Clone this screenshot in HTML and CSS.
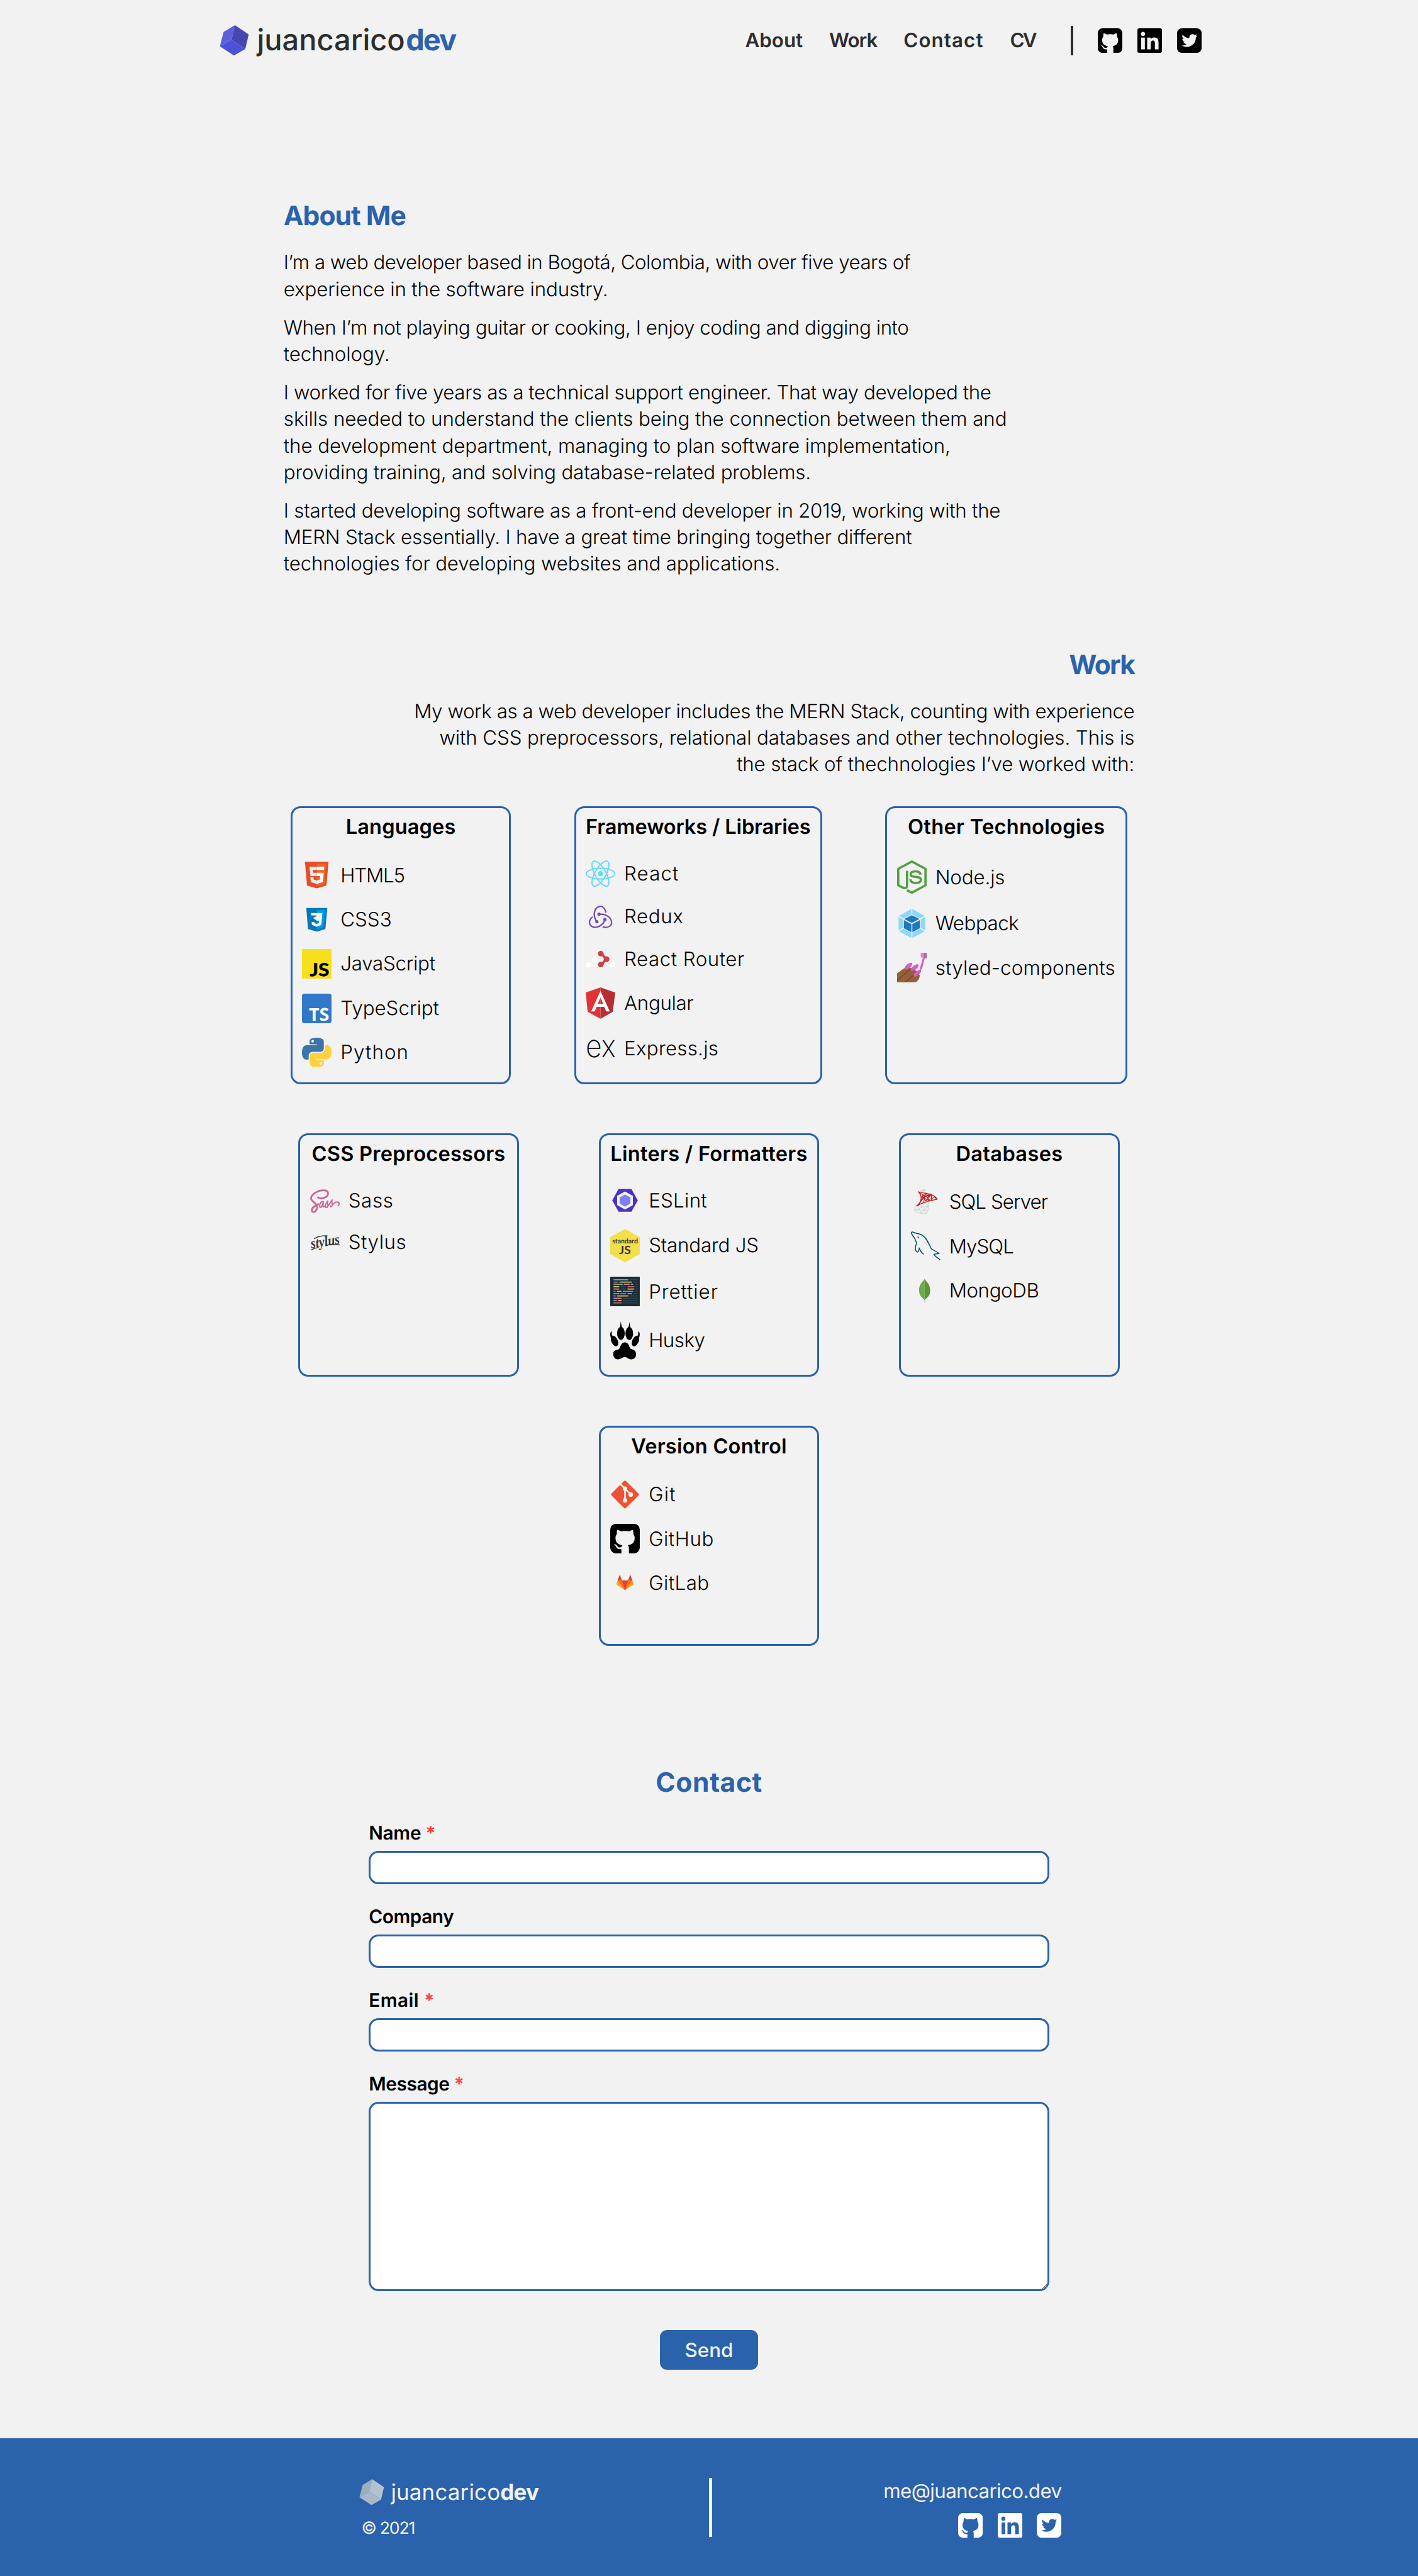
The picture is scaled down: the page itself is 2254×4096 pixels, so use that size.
FILE: index.html
```html
<!DOCTYPE html>
<html lang="en">
<head>
<meta charset="utf-8">
<title>juancaricodev</title>
<link rel="stylesheet" href="styles.css">
</head>
<body>
<svg class="sprite" aria-hidden="true">
  <symbol id="github" viewBox="0 0 180 180"><path d="M34 0H146A34 34 0 0 1 180 34V146A34 34 0 0 1 146 180H114V150C114 140 112 134 107 130C134 127 149 112 149 86C149 76 146 68 140 61C142 54 141 45 138 37C131 37 123 41 115 46C99 42 82 42 66 46C58 41 50 37 43 37C40 45 39 54 41 61C35 68 32 76 32 86C32 112 47 127 74 130C71 133 69 137 68 142C56 146 48 143 42 134C38 127 32 124 25 124C23 126 26 128 29 130C34 134 36 140 39 145C45 154 56 155 68 154V180H34A34 34 0 0 1 0 146V34A34 34 0 0 1 34 0Z"/></symbol>
  <symbol id="linkedin" viewBox="0 32 448 448"><path d="M416 32H31.9C14.3 32 0 46.5 0 64.3v383.4C0 465.5 14.3 480 31.9 480H416c17.6 0 32-14.500 32-32.300V64.300c0-17.800-14.400-32.300-32-32.300zM135.400 416H69V202.200h66.500V416zm-33.200-243c-21.300 0-38.500-17.300-38.500-38.500S80.900 96 102.200 96c21.200 0 38.500 17.300 38.500 38.500 0 21.300-17.200 38.500-38.500 38.500zm282.100 243h-66.400V312c0-24.800-.5-56.700-34.500-56.700-34.600 0-39.900 27-39.900 54.900V416h-66.400V202.200h63.700v29.200h.9c8.900-16.800 30.600-34.500 62.900-34.500 67.200 0 79.700 44.300 79.700 101.900V416z"/></symbol>
  <symbol id="twitter" viewBox="0 32 448 448"><rect y="32" width="448" height="448" rx="88"/><path class="cut" transform="translate(26 24) scale(.9)" d="M351.100 190.800c.2 2.800.2 5.700.2 8.500 0 86.700-66 186.600-186.600 186.600-37.200 0-71.700-10.800-100.700-29.400 5.300.6 10.400.8 15.800.8 30.700 0 58.900-10.400 81.400-28-28.800-.6-53-19.500-61.300-45.500 10.100 1.500 19.200 1.500 29.600-1.200-30-6.100-52.500-32.500-52.500-64.400v-.8c8.700 4.900 18.900 7.900 29.600 8.300a65.447 65.447 0 0 1-29.200-54.600c0-12.200 3.200-23.400 8.900-33.100 32.300 39.800 80.800 65.800 135.200 68.600-9.300-44.500 24-80.600 64-80.600 18.900 0 35.900 7.900 47.900 20.700 14.800-2.800 29-8.300 41.600-15.800-4.900 15.200-15.200 28-28.800 36.100 13.200-1.400 26-5.100 37.800-10.200-8.900 13.100-20.100 24.700-32.900 34z"/></symbol>
</svg>

<header class="header">
  <a class="brand">
    <svg class="gem" viewBox="446 51 60 62">
      <path fill="#5c60da" d="M477.200 51L470.200 80.700 446.600 94 454.200 64.700Z"/>
      <path fill="#4648b0" d="M477.200 51L505.200 70 498.200 99.700 470.200 80.700Z"/>
      <path fill="#4b52d8" d="M470.200 80.700L498.200 99.700 475.300 112.700 446.600 94Z"/>
    </svg>
    <span class="brand-name">juancarico<b>dev</b></span>
  </a>
  <nav class="nav">
    <a>About</a><a class="m29">Work</a><a class="p34">Contact</a><a class="m84">CV</a>
  </nav>
  <span class="divider"></span>
  <div class="social">
    <svg><use href="#github"/></svg><svg><use href="#linkedin"/></svg><svg><use href="#twitter"/></svg>
  </div>
</header>

<main class="main">
  <section class="about">
    <h2 class="m23">About Me</h2>
    <p><span class="m17">I’m a web developer based in Bogotá, Colombia, with over five years of</span>
      <span class="m04">experience in the software industry.</span></p>
    <p><span class="m14">When I’m not playing guitar or cooking, I enjoy coding and digging into</span>
      <span class="m03">technology.</span></p>
    <p><span class="m12">I worked for five years as a technical support engineer. That way developed the</span>
      <span class="m02">skills needed to understand the clients being the connection between them and</span>
      <span class="m02">the development department, managing to plan software implementation,</span>
      <span class="m05">providing training, and solving database-related problems.</span></p>
    <p><span class="m08">I started developing software as a front-end developer in 2019, working with the</span>
      <span class="m07">MERN Stack essentially. I have a great time bringing together different</span>
      <span class="m05">technologies for developing websites and applications.</span></p>
  </section>

  <section class="work">
    <h2 class="m41">Work</h2>
    <p><span class="m14">My work as a web developer includes the MERN Stack, counting with experience</span>
      <span class="m03">with CSS preprocessors, relational databases and other technologies. This is</span>
      <span class="m05">the stack of thechnologies I’ve worked with:</span></p>
  </section>

  <div class="cards">
    <div class="row row-first">
      <article class="card">
        <h3 class="p04">Languages</h3>
        <ul>
          <li><svg class="i60" viewBox="0 0 60 60"><g transform="translate(6 3)"><path fill="#e44d26" d="M0 0H48L43.700 48.200 24 54 4.300 48.200Z"/><path fill="#f16529" d="M24 3.800H43L39.700 44.400 24 49Z"/><path fill="#ebebeb" d="M9 10H24V16.400H16L16.600 22.300H24V29H11.400ZM10.900 31H17.400L17.800 36 24 37.800V44.800L12 41Z"/><path fill="#fff" d="M24 10H39.300L38.700 16.400H24ZM24 22.300H38L36.300 41.200 24 44.800V37.800L30.500 36 31.100 29H24Z"/></g></svg><span class="m38">HTML5</span></li>
          <li><svg class="i60" viewBox="0 0 60 60"><g transform="translate(8.700 6)"><path fill="#0277bd" d="M0 0H42.700L38.800 43 21.300 48 3.500 43Z"/><path fill="#039be5" d="M21.300 4H38.300L35 40 21.300 43.600Z"/><path fill="#fff" d="M9.700 10.300H32.700L30.500 34.500 21.300 38 11.500 34.700 11 28.500H16.500L16.800 31 21.300 32.300 25.800 31 26.300 25.600H21.300L10.200 20.800 21.300 15.400H10.200Z M21.300 15.400V20.500H26.600L27 15.400Z" fill-rule="evenodd"/><path fill="#fff" d="M10.200 20.500L21.300 15.400H27L26.600 20.500 21.300 25.600Z"/><path fill="#0277bd" d="M9.700 15.400H21.300V16.400L14 20.500H9.700ZM9.700 20.500H14L21.300 25.600H9.700Z"/></g></svg><span>CSS3</span></li>
          <li><svg class="i60" viewBox="0 0 60 60"><path fill="#f7df1e" d="M0 0H60V60H0Z"/><text class="mark" x="16" y="54.700" font-size="36" textLength="39.500" lengthAdjust="spacingAndGlyphs">JS</text></svg><span class="m08">JavaScript</span></li>
          <li><svg class="i60" viewBox="0 0 60 60"><rect width="60" height="60" rx="5" fill="#3178c6"/><text class="mark mark-ts" x="14" y="54.700" font-size="36.500" textLength="41.500" lengthAdjust="spacingAndGlyphs">TS</text></svg><span>TypeScript</span></li>
          <li><svg class="i60" viewBox="0 0 256 256"><path fill="#3a75a8" d="M126.916.072c-64.832 0-60.784 28.115-60.784 28.115l.072 29.128h61.868v8.745H41.631S.145 61.355.145 126.770c0 65.417 36.210 63.097 36.210 63.097h21.610v-30.356s-1.165-36.210 35.632-36.210h61.362s34.475.557 34.475-33.319V33.970S194.670.072 126.916.072zM92.802 19.660a11.120 11.120 0 0 1 11.130 11.130 11.120 11.120 0 0 1-11.130 11.130 11.120 11.120 0 0 1-11.130-11.130 11.120 11.120 0 0 1 11.130-11.130z"/><path fill="#ffd140" d="M128.757 254.126c64.832 0 60.784-28.115 60.784-28.115l-.072-29.127H127.600v-8.745h86.441s41.486 4.705 41.486-60.712c0-65.416-36.210-63.096-36.210-63.096h-21.610v30.355s1.165 36.210-35.632 36.210h-61.362s-34.475-.557-34.475 33.320v56.013s-5.235 33.897 62.518 33.897zm34.114-19.586a11.120 11.120 0 0 1-11.130-11.130 11.120 11.120 0 0 1 11.130-11.131 11.120 11.120 0 0 1 11.130 11.130 11.120 11.120 0 0 1-11.130 11.130z"/></svg><span class="p35">Python</span></li>
        </ul>
      </article>

      <article class="card">
        <h3 class="m04">Frameworks / Libraries</h3>
        <ul>
          <li><svg class="i54" viewBox="0 0 60 54"><g fill="none" stroke="#61dafb" stroke-width="2.400"><ellipse cx="30" cy="27" rx="28.800" ry="11"/><ellipse cx="30" cy="27" rx="28.800" ry="11" transform="rotate(60 30 27)"/><ellipse cx="30" cy="27" rx="28.800" ry="11" transform="rotate(120 30 27)"/></g><circle cx="30" cy="27" r="5.200" fill="#61dafb"/></svg><span class="p35">React</span></li>
          <li><svg class="i60" viewBox="0 0 60 60"><path fill="#764abc" transform="translate(6.500 6.500) scale(1.980 2)" d="M16.634 16.504c.87-.075 1.543-.84 1.500-1.754-.047-.914-.796-1.648-1.709-1.648h-.061a1.710 1.710 0 00-1.648 1.769c.03.479.226.869.494 1.153-1.048 2.038-2.621 3.535-5.005 4.795-1.603.838-3.296 1.154-4.944.93-1.378-.195-2.456-.81-3.116-1.799-.988-1.499-1.078-3.116-.255-4.734.601-1.170 1.499-2.023 2.099-2.443-.15-.389-.33-1.048-.42-1.542-4.436 3.177-3.985 7.521-2.637 9.574 1.004 1.498 3.057 2.456 5.304 2.456.599 0 1.229-.044 1.843-.194 3.896-.749 6.848-3.086 8.541-6.532zm5.348-3.746c-2.320-2.728-5.738-4.226-9.634-4.226h-.51c-.253-.554-.837-.899-1.498-.899h-.045c-.943 0-1.678.81-1.647 1.753.03.898.794 1.648 1.708 1.648h.074c.675-.03 1.259-.45 1.498-1.049h.555c2.309 0 4.495.674 6.488 1.992 1.527 1.005 2.622 2.323 3.237 3.896.538 1.288.509 2.547-.045 3.597-.855 1.647-2.294 2.517-4.196 2.517-1.199 0-2.367-.375-2.967-.644-.359.298-.959.793-1.394 1.093 1.318.598 2.652.943 3.940.943 2.922 0 5.093-1.647 5.918-3.236.898-1.798.824-4.824-1.470-7.416zM6.490 17.042c.03.899.793 1.648 1.708 1.648h.06a1.688 1.688 0 001.648-1.768c0-.9-.779-1.647-1.693-1.647h-.06c-.06 0-.149 0-.226.029-1.243-2.098-1.768-4.347-1.572-6.772.12-1.828.72-3.417 1.797-4.735.899-1.124 2.592-1.679 3.746-1.708 3.236-.061 4.585 3.971 4.689 5.574l1.498.45c-.345-4.914-3.400-7.492-6.322-7.492-2.742 0-5.273 1.993-6.293 4.915-1.393 3.896-.479 7.641 1.229 10.638-.149.195-.239.554-.209.868z"/></svg><span class="p19">Redux</span></li>
          <li><svg class="i54" viewBox="0 0 60 54"><g fill="#fff"><circle cx="5.500" cy="38.200" r="5.600"/><circle cx="18.300" cy="26.700" r="5.600"/><circle cx="54.400" cy="38.200" r="5.600"/></g><g fill="#ca4245"><circle cx="30.500" cy="15.800" r="5.600"/><circle cx="30.500" cy="38" r="5.600"/><circle cx="42.700" cy="27" r="5.500"/><path d="M30 10.300C38 10.500 35 20 41 21.500H43V32.500H41C35 34 38 43.500 30 43.500L33 33C38 31 38 23 33 21Z"/></g></svg><span class="p16">React Router</span></li>
          <li><svg class="i64" viewBox="0 0 60 64"><path fill="#e23237" d="M30 0V64L4 49.500 0 10.500Z"/><path fill="#b52e31" d="M30 0L60 10.500 55 49.500 30 64Z"/><path fill="#fff" fill-rule="evenodd" d="M30 7L11 49H18.300L22.200 39.500H37.700L41.600 49H48.900ZM30 20L35.600 33.500H24.500Z"/></svg><span class="m11">Angular</span></li>
          <li><svg class="i60" viewBox="0 0 60 60"><text class="mark-ex" x="0" y="47" font-size="64" textLength="61" lengthAdjust="spacingAndGlyphs">ex</text></svg><span class="p08">Express.js</span></li>
        </ul>
      </article>

      <article class="card">
        <h3 class="p09">Other Technologies</h3>
        <ul>
          <li><svg class="i68" viewBox="0 0 60 68"><g fill="none" stroke="#539e43" stroke-width="4.600" stroke-linejoin="round"><path d="M20 60.500L30 65.700 57.700 50.800V17.200L30 2.300 2.300 17.200V50.800L11.500 55.300Q20.200 59 20.200 50V21.500"/><path d="M47.500 29C47 24.500 43 22.300 38 22.300 31 22.300 27.500 24.500 27.500 28 27.500 32 31 33 38 33.700 45 34.400 48.300 35.500 48.300 39.700 48.300 44 44.500 46 38.500 46 31 46 27.300 43.500 26.700 38.500"/></g></svg><span class="m04">Node.js</span></li>
          <li><svg class="i60" viewBox="0 0 60 60"><path fill="#8ed6fb" fill-rule="evenodd" d="M30 0L57 15V45L30 60 3 45V15ZM30 11.500L12 20.500V40L30 49.500 48 40V20.500Z"/><path class="gap" stroke-width="2" d="M30 0V12M30 48V60M57 15L47 21M13 21L3 15M3 45L13 39M47 39L57 45"/><path fill="#1c78c0" d="M30 13L45.500 20.800 30 28.800 14.500 20.800ZM13.800 23L29 31V47.500L13.800 39.500ZM46.200 23L31 31V47.500L46.200 39.500Z"/></svg><span class="m15">Webpack</span></li>
          <li><svg class="i60" viewBox="0 0 60 60"><path fill="#955f38" d="M0 42C8 36 14 31 21 28L33 33 41 38 46 46C46 52 43 57 37 60H0Z"/><path fill="none" stroke="#6d3f22" stroke-width="1.600" d="M0 56C10 48 18 41 26 34M16 60C24 54 30 48 36 43"/><g fill="#d35fc0"><ellipse cx="23" cy="27" rx="9.500" ry="4.200" transform="rotate(-38 23 27)"/><ellipse cx="36" cy="30" rx="9.500" ry="4.200" transform="rotate(-38 36 30)"/><ellipse cx="41" cy="41.500" rx="9.500" ry="4" transform="rotate(-38 41 41.500)"/><path d="M52.500 10H56.500L51 31 45 39 47 29Z"/></g><path fill="#f07ccb" d="M48 0H60V11H55L48 9Z"/><path fill="#b0629b" d="M55 0H60V11H55Z"/></svg><span class="p06">styled-components</span></li>
        </ul>
      </article>
    </div>

    <div class="row row-second">
      <article class="card">
        <h3 class="p07">CSS Preprocessors</h3>
        <ul>
          <li><svg class="i54" viewBox="0 0 60 54"><g fill="none" stroke="#cf649a" stroke-linecap="round" stroke-linejoin="round"><path stroke-width="3.600" d="M16 20.500C22 24 36 22 36.300 12.500 36.500 3 20 5 10 11 2 16.500 -1 23 5 28 10 32 16 37 13.500 44 10.500 51.500 3 52 3.500 46 4 40 10 37 17 34"/><path stroke-width="2.600" d="M26.500 29C21 28 18 37 20 40.500 22 43 25 36 27 30.500 25.500 38 26 41 29 39L36 27.500C32 31 39 35 35 40 33.500 42 31 41 31.500 39M36 38L45 25.500C41 30 48 34 44 38.500 42.500 40 40.500 39 41 37.500M45.500 36C51 27 60 29 58.800 34 58.500 35.500 58 36 57.300 36.500"/></g></svg><span class="p19">Sass</span></li>
          <li><svg class="i54" viewBox="0 0 60 54"><g transform="rotate(-9 30 27)"><text class="mark-stylus" x="1" y="35" font-size="29" textLength="59" lengthAdjust="spacingAndGlyphs">stylus</text></g><path fill="none" stroke="#333" stroke-width="1.800" d="M31 33.500Q46 30.500 60 32.500M2 43Q8 39 17 37.500M8 20Q20 13 35 14"/></svg><span class="p17">Stylus</span></li>
        </ul>
      </article>

      <article class="card">
        <h3 class="p09">Linters / Formatters</h3>
        <ul>
          <li><svg class="i54" viewBox="0 0 60 54"><path fill="#4b32c3" fill-rule="evenodd" d="M4 26.500L17 3.300H43L56 26.500 43 49.500H17ZM30 8.200L14 17.300V36L30 45 46 36V17.300Z"/><path fill="#8080f2" d="M30 14.300L41 20.500V33L30 39.200 19 33V20.500Z"/></svg><span class="p09">ESLint</span></li>
          <li><svg class="i68" viewBox="0 0 60 68"><path fill="#f3df49" d="M30 0L60 17V51L30 68 0 51V17Z"/><text class="mark-std" x="4" y="30" font-size="13.500" textLength="52" lengthAdjust="spacingAndGlyphs">standard</text><text class="mark-std" x="18" y="51.600" font-size="23" textLength="24" lengthAdjust="spacingAndGlyphs">JS</text></svg><span class="m06">Standard JS</span></li>
          <li><svg class="i60" viewBox="0 0 60 60"><path fill="#1a2b34" d="M0 0H60V60H0Z"/><g fill="none" stroke-width="2.200" stroke-linecap="round"><path stroke="#31434c" d="M40.500 6.200H55M47.500 10.900H55M50 15.600H55M22 20.300H31M52 20.300H55M22 25H31M52 25H55M50 29.700H55M47.500 34.400H55M40.500 39.100H55M26 43.800H55M26 48.500H55M26 53.200H55"/><path stroke="#56b3b4" d="M7.500 6.200H36M7.500 15.600H24.500M42.500 15.600H45.500M26.500 29.700H45.500M7.500 34.400H17.500M7.500 48.500H12.500"/><path stroke="#ea5e5e" d="M7.500 10.900H15M36 20.300H48M7.500 29.700H10M21.500 34.400H31M7.500 53.200H22"/><path stroke="#f7ba3e" d="M19.500 10.900H43M7.500 20.300H17.500M36 25H48M14.500 29.700H22M14.500 39.100H36M17 48.500H22"/><path stroke="#bf85bf" d="M28.500 15.600H38.500M7.500 25H17.500M36 34.400H43M7.500 39.100H10M7.500 43.800H22"/></g></svg><span class="p30">Prettier</span></li>
          <li><svg class="i78" viewBox="0 0 60 78"><ellipse cx="21.700" cy="24.500" rx="7.800" ry="13.300"/><ellipse cx="38.700" cy="24.800" rx="7.800" ry="13.300"/><path d="M19.500 13Q21 6 21.300 0Q22.500 7 24 13ZM36.500 13Q39 7 39.300 1Q40 7 41 13ZM1.500 34C-1 27 0 21 3 20C3 26 3 28 6 31ZM58.500 34C61 27 60 21 57 20C57 26 57 28 54 31Z"/><ellipse cx="8.700" cy="40" rx="6.500" ry="11.500" transform="rotate(-24 8.700 40)"/><ellipse cx="51.300" cy="40" rx="6.500" ry="11.500" transform="rotate(24 51.300 40)"/><path d="M30 42.700C37 42.700 38 50 40 54 42 58 52 56 52.500 66 53 74 47 77.500 42 77.300 36 76.500 34 72.500 29.500 72.500 25 72.500 22 77 15.500 77.300 9 77 6 72 6.200 66 6.500 56 16 60 19 54.500 21.500 50 22 42.700 30 42.700Z"/></svg><span class="m15">Husky</span></li>
        </ul>
      </article>

      <article class="card">
        <h3 class="p11">Databases</h3>
        <ul>
          <li><svg class="i60" viewBox="0 0 60 60"><g fill="none" stroke-width="1.300" stroke-linejoin="round"><path stroke="#c8d3d8" d="M17 8L28 4 29 12M17 8L29 7M20 10L28 4M12 36C5 42 6 49 14 51 20 53.500 26 54 31 53.500 36 46 37 36 35.500 28M12 36L24 40 36 38M8 46L24 40 31 53.500M24 40L28 31 36 38 20 52.500 14 38M8 46L34 46M28 31L16 35"/><path stroke="#b7191c" stroke-width="1.600" d="M15 9C25 13 44 10 53.500 24 40 27 25 29 11.500 38 22 29 24 18 15 9ZM19 12L28 17 33 12 21 20 39 27 31 18 42 14 30 28 22 15M21 25L36 14M16 34L28 18 26 30M42 14L41 26 48 18 50 23M33 20L42 14"/></g></svg><span class="m30">SQL Server</span></li>
          <li><svg class="i60" viewBox="0 0 60 60"><g fill="none" stroke="#00546b" stroke-width="2" stroke-linejoin="round"><path d="M26 46.600C21 43 18.500 39 16.700 33.500 16.500 38 15.500 41.500 13 42 9.500 41 8 35 9.500 30 11 26 12 25 11 22 9 19 9 17 7.500 14 5 10 1 7 1 3 1.500 -.5 7 2 11.700 4.200 16 4.500 18 5 21.700 7 34 14 36 27 42 36 47 39 53 41 57 45 53 45.500 50 45.500 46.500 46.500 49 51 54 54 59.500 57.600"/><path d="M13.500 11C15 11 15.500 12 15 14"/></g></svg><span class="m30">MySQL</span></li>
          <li><svg class="i60" viewBox="0 0 60 60"><path fill="#b8b8b4" d="M27 44H28.500L29 54H27.600Z"/><path fill="#6cac48" d="M27.800 6C22 13 16.500 18 16.500 29 16.500 39 22 44 27.800 48Z"/><path fill="#599636" d="M27.800 6C33 13 39 18 39 29 39 39 34 44 27.800 48Z"/></svg><span class="m12">MongoDB</span></li>
        </ul>
      </article>
    </div>

    <div class="row row-third">
      <article class="card">
        <h3 class="p07">Version Control</h3>
        <ul>
          <li><svg class="i60" viewBox="0 0 60 60"><rect x="9.200" y="9" width="41.600" height="41.600" rx="3" transform="rotate(45 30 29.800)" fill="#f05133"/><path class="gap" stroke-width="3.400" d="M20 8L30 18V42M30 18L41.500 29.500"/><g class="cut"><circle cx="30" cy="18" r="4.600"/><circle cx="30" cy="42" r="4.600"/><circle cx="41.700" cy="30" r="4.600"/></g></svg><span class="p40">Git</span></li>
          <li><svg class="i60"><use href="#github"/></svg><span class="p17">GitHub</span></li>
          <li><svg class="i60" viewBox="0 0 60 60"><path fill="#fca326" d="M15 24.300L12.700 31Q12.500 32.500 13.700 33.500L30 44 46.300 33.500Q47.500 32.500 47.300 31L45 24.300Z"/><path fill="#fc6d26" d="M15 24.300H45L30 44Z"/><path fill="#e24329" d="M24 24.300H36L30 44ZM15 24.300L19.300 12.300 24 24.300ZM45 24.300L40.700 12.300 36 24.300Z"/></svg><span class="p15">GitLab</span></li>
        </ul>
      </article>
    </div>
  </div>

  <section class="contact">
    <h2 class="p15">Contact</h2>
    <form class="form">
      <label class="m08">Name <i>*</i></label><input type="text">
      <label class="m14">Company</label><input type="text">
      <label class="p17">Email <i>*</i></label><input type="text">
      <label class="m12">Message <i>*</i></label><textarea></textarea>
      <button type="button">Send</button>
    </form>
  </section>
</main>

<footer class="footer">
  <div class="foot-left">
    <a class="brand">
      <svg class="gem" viewBox="446 51 60 62">
        <path fill="#a0adba" d="M477.200 51L470.200 80.700 446.600 94 454.200 64.700Z"/>
        <path fill="#b4c2d0" d="M477.200 51L505.200 70 498.200 99.700 470.200 80.700Z"/>
        <path fill="#a9b7c7" d="M470.200 80.700L498.200 99.700 475.300 112.700 446.600 94Z"/>
      </svg>
      <span class="brand-name">juancarico<b>dev</b></span>
    </a>
    <span class="copyright">© 2021</span>
  </div>
  <span class="divider"></span>
  <div class="foot-right">
    <span class="mail">me@juancarico.dev</span>
    <div class="social">
      <svg><use href="#github"/></svg><svg><use href="#linkedin"/></svg><svg><use href="#twitter"/></svg>
    </div>
  </div>
</footer>
</body>
</html>
```
FILE: styles.css
```css
/* 1rem = 10 design units on a 2880-unit wide canvas */
html { font-size: calc(100vw / 288); }
* { box-sizing: border-box; margin: 0; padding: 0; }

body {
  --bg: #f2f2f2;
  --blue: #2a62ac;
  background: var(--bg);
  color: #000;
  font-family: Inter, "Open Sans", sans-serif;
  font-size: 4rem;
  font-weight: 300;
  line-height: 5.4rem;
  text-rendering: geometricPrecision;
}
svg { display: block; flex: none; overflow: visible; }
.sprite { position: absolute; width: 0; height: 0; }
.cut { fill: var(--bg); }
.gap { fill: none; stroke: var(--bg); }

/* tracking steps, in thousandths of an em */
.m84 { letter-spacing: -.084em; } .m41 { letter-spacing: -.041em; }
.m38 { letter-spacing: -.038em; } .m30 { letter-spacing: -.03em; }
.m29 { letter-spacing: -.029em; } .m23 { letter-spacing: -.023em; }
.m17 { letter-spacing: -.0169em; } .m15 { letter-spacing: -.015em; }
.m14 { letter-spacing: -.0139em; } .m12 { letter-spacing: -.0125em; }
.m11 { letter-spacing: -.011em; } .m08 { letter-spacing: -.0083em; }
.m07 { letter-spacing: -.0068em; } .m06 { letter-spacing: -.006em; }
.m05 { letter-spacing: -.0047em; } .m04 { letter-spacing: -.0042em; }
.m03 { letter-spacing: -.0032em; } .m02 { letter-spacing: -.002em; }
.p04 { letter-spacing: .004em; } .p06 { letter-spacing: .006em; }
.p07 { letter-spacing: .0073em; } .p08 { letter-spacing: .008em; }
.p09 { letter-spacing: .009em; } .p11 { letter-spacing: .011em; }
.p15 { letter-spacing: .015em; } .p16 { letter-spacing: .016em; }
.p17 { letter-spacing: .017em; } .p19 { letter-spacing: .019em; }
.p30 { letter-spacing: .03em; } .p34 { letter-spacing: .034em; }
.p35 { letter-spacing: .035em; } .p40 { letter-spacing: .04em; }

.header {
  display: flex;
  align-items: center;
  height: 16.4rem;
  padding: 0 44rem 0 44.6rem;
  color: #2d2d2d;
}
.brand { display: flex; align-items: center; white-space: nowrap; }
.gem { width: 6rem; height: 6.2rem; }
.brand-name { margin-left: 1.6rem; font-size: 6rem; font-weight: 500; }
.brand-name b { margin-left: .2rem; font-weight: 700; letter-spacing: -.043em; color: var(--blue); }
.nav { display: flex; gap: 5.35rem; margin-left: auto; font-weight: 600; white-space: nowrap; }
.divider { width: .6rem; background: #2d2d2d; flex: none; }
.header .divider { height: 6rem; margin: 0 5rem 0 7.1rem; }
.social { display: flex; gap: 3rem; fill: #000; }
.social svg { width: 5rem; height: 5rem; }

.main { display: block; padding-top: 23.9rem; }
h2 { font-size: 5.44rem; font-weight: 700; line-height: 7.4rem; color: var(--blue); }
.about, .work { width: 172.8rem; margin: 0 auto; }
.about h2, .work h2 { margin-bottom: 2.95rem; }
.about p + p { margin-top: 2.4rem; }
p span { display: block; white-space: nowrap; }
.work { margin-top: 14.2rem; text-align: right; }

.cards { display: flex; flex-direction: column; gap: 10rem; margin-top: 5.85rem; }
.row { display: flex; justify-content: center; gap: 16.2rem; }
.row-first { height: 56.4rem; gap: 12.8rem; }
.row-second { height: 49.4rem; }
.row-third { height: 44.8rem; }
.card {
  min-width: 44.8rem;
  border: .4rem solid var(--blue);
  border-radius: 2rem;
  padding: 1rem 2rem;
}
.card h3 {
  margin-bottom: 4rem;
  font-size: 4.16rem;
  font-weight: 600;
  line-height: 5.6rem;
  text-align: center;
  white-space: nowrap;
}
.card ul { display: flex; flex-direction: column; gap: 3rem; list-style: none; }
.card li { display: flex; align-items: center; gap: 1.78rem; white-space: nowrap; }
.row-first .card:nth-child(2) { width: 50.4rem; }
.row-first .card:nth-child(3) { width: 49.2rem; }
.row-first .card:nth-child(2) h3 { margin-left: -.5rem; margin-right: -.5rem; }
.i54, .i60, .i64, .i68, .i78 { width: 6rem; }
.i54 { height: 5.4rem; }
.i60 { height: 6rem; }
.i64 { height: 6.4rem; }
.i68 { height: 6.8rem; }
.i78 { height: 7.8rem; }
.mark { font: 700 36px Lato, sans-serif; font-size: 36px; fill: #000; stroke: #000; stroke-width: .8; }
.mark-ts { font-family: "Open Sans", sans-serif; fill: #fff; stroke: none; }
.mark-ex { font-family: Inter, sans-serif; font-weight: 200; }
.mark-stylus { font-family: "Liberation Serif", serif; font-style: italic; font-weight: 700; fill: #333; }
.mark-std { font-family: Lato, sans-serif; font-weight: 700; fill: #323232; }

.contact { width: 138.2rem; margin: 24.1rem auto 0; }
.contact h2 { margin-bottom: 3.9rem; text-align: center; }
.form { display: flex; flex-direction: column; }
.form label { font-size: 3.8rem; font-weight: 600; line-height: 5.2rem; }
.form i { font-style: normal; color: #ff3d3d; }
.form input, .form textarea {
  width: 100%;
  height: 6.8rem;
  margin: 1rem 0 4rem;
  border: .4rem solid var(--blue);
  border-radius: 2rem;
  background: #fff;
}
.form textarea { height: 38.4rem; margin-bottom: 8rem; }
.form button {
  align-self: center;
  width: 20rem;
  height: 8rem;
  border: 0;
  border-radius: 1.4rem;
  background: var(--blue);
  color: #f2f2f2;
  font: 500 4rem Inter, sans-serif;
}

.footer {
  --bg: #2a62ac;
  display: flex;
  justify-content: space-between;
  height: 28rem;
  margin-top: 14rem;
  padding: 8rem 72.4rem 0 73rem;
  background: var(--bg);
  color: #f2f2f2;
  font-weight: 400;
}
.foot-left, .foot-right { display: flex; flex-direction: column; width: 43rem; }
.footer .gem { width: 5.1rem; height: 5.3rem; }
.footer .brand-name { margin-left: 1.3rem; padding-top: .3rem; font-size: 4.46rem; font-weight: 400; letter-spacing: .005em; }
.footer .brand-name b { margin-left: 0; letter-spacing: -.022em; color: inherit; }
.copyright { margin: 1.8rem 0 0 .4rem; font-size: 3.4rem; letter-spacing: -.045em; }
.footer .divider { height: 12rem; background: #f2f2f2; }
.foot-right { align-items: flex-end; }
.mail { margin-bottom: 1.8rem; letter-spacing: -.02em; }
.footer .social { fill: #fff; }
```
